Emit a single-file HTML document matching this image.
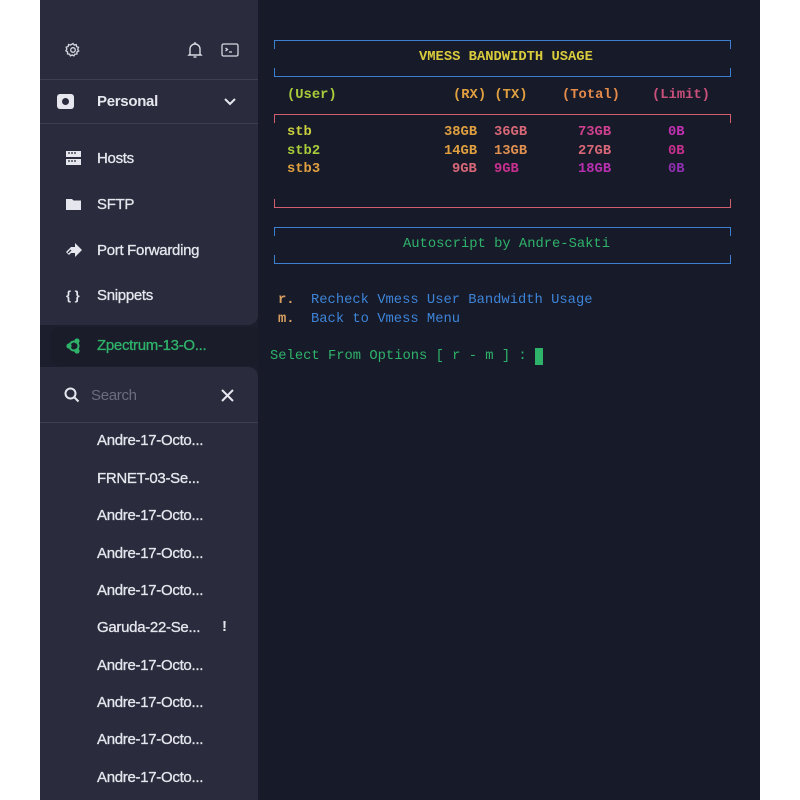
<!DOCTYPE html>
<html><head><meta charset="utf-8"><style>
*{margin:0;padding:0;box-sizing:border-box}
body{width:800px;height:800px;background:#fff;position:relative;overflow:hidden;font-family:"Liberation Sans",sans-serif}
#side{position:absolute;left:40px;top:0;width:218px;height:800px;background:#1c1e2d}
.panel{position:absolute;left:0;width:218px;background:#2a2c3d}
#term{position:absolute;left:258px;top:0;width:502px;height:800px;background:#171a29}
.t{position:absolute;font-family:"Liberation Mono",monospace;font-size:13.8px;white-space:pre;line-height:16px}
.b{font-weight:bold}
.nav{position:absolute;left:57px;color:#e6e7ee;font-size:15px;font-weight:bold;letter-spacing:-0.3px}
.n{font-weight:normal;-webkit-text-stroke:0.3px #e6e7ee}
.ic{position:absolute;left:26px}
.hl{position:absolute;height:1px;background:#3c3f52;left:0;width:218px}
.box{position:absolute;left:274px;width:457px;height:9px}
</style></head><body>
<div id="side">
  <div class="panel" style="top:0;height:325px;border-bottom-right-radius:10px"></div>
  <div class="panel" style="top:367px;height:433px;border-top-right-radius:10px"></div>
  <div style="position:absolute;left:10px;top:327px;width:208px;height:39px;background:#1a1c2a;border-radius:10px 0 0 10px"></div>
  <div class="hl" style="top:79px"></div>
  <div class="hl" style="top:123px"></div>
  <div class="hl" style="top:422px"></div>
  <svg class="ic" style="left:25px;top:42px" width="16" height="16" viewBox="0 0 16 16" fill="none" stroke="#d8d9e2" stroke-width="1.3"><circle cx="8" cy="8" r="2.3"/><path d="M8 1.5l1.2 1.6 2-.5.4 2 1.9.8-.8 1.9 1 1.7-1.8 1 0 2-2 .1-1 1.8-1.7-1-1.8 1-.9-1.8-2-.2.1-2-1.7-1.1 1-1.7-.7-1.9 1.9-.7.5-2 2 .6z"/></svg>
  <svg style="position:absolute;left:147px;top:41px" width="16" height="18" viewBox="0 0 16 18" fill="none" stroke="#d8d9e2" stroke-width="1.4"><path d="M3 13V8a5 5 0 0110 0v5l1 1H2z"/><path d="M6.5 16h3"/><path d="M8 1v2"/></svg>
  <svg style="position:absolute;left:181px;top:43px" width="18" height="14" viewBox="0 0 18 14" fill="none" stroke="#d8d9e2" stroke-width="1.3"><rect x="1" y="1" width="16" height="12" rx="1.5"/><path d="M4.5 5l2 1.5-2 1.5M8 9h3"/></svg>
  <div style="position:absolute;left:17px;top:94px;width:17px;height:15px;background:#e6e7ee;border-radius:3px"></div>
  <div style="position:absolute;left:22px;top:98px;width:7px;height:7px;background:#2a2c3d;border-radius:50%"></div>
  <div class="nav" style="left:57px;top:93px">Personal</div>
  <svg style="position:absolute;left:183px;top:97px" width="14" height="10" viewBox="0 0 14 10" fill="none" stroke="#e6e7ee" stroke-width="2"><path d="M2 2l5 5 5-5"/></svg>
  <svg style="position:absolute;left:26px;top:151px" width="15" height="14" viewBox="0 0 15 14"><rect x="0" y="0" width="15" height="6" fill="#e6e7ee"/><rect x="0" y="8" width="15" height="6" fill="#e6e7ee"/><path d="M2 2h2M5 2h2M8 2h2M2 10h2M5 10h2M8 10h2" stroke="#2a2c3d" stroke-width="1.2"/></svg>
  <div class="nav n" style="top:150px">Hosts</div>
  <svg style="position:absolute;left:26px;top:198px" width="15" height="12" viewBox="0 0 15 12"><path d="M0 1h6l1.5 1.5H15V12H0z" fill="#e6e7ee"/></svg>
  <div class="nav n" style="top:196px">SFTP</div>
  <svg style="position:absolute;left:26px;top:243px" width="16" height="14" viewBox="0 0 16 14"><path d="M0 9l5-5h4V0l7 7-7 7v-4H5l-2 2z" fill="#e6e7ee"/><path d="M2 10l3-3" stroke="#2a2c3d" stroke-width="1.3"/></svg>
  <div class="nav n" style="top:242px">Port Forwarding</div>
  <div style="position:absolute;left:26px;top:288px;color:#e6e7ee;font-size:13px;font-weight:bold">{ }</div>
  <div class="nav n" style="top:287px">Snippets</div>
  <svg style="position:absolute;left:26px;top:338px" width="15" height="16" viewBox="0 0 15 16" fill="none" stroke="#2fb36a" stroke-width="2"><circle cx="8" cy="8" r="4.5"/><circle cx="3" cy="8" r="1.6" fill="#2fb36a"/><circle cx="11" cy="3" r="1.6" fill="#2fb36a"/><circle cx="11" cy="13" r="1.6" fill="#2fb36a"/></svg>
  <div class="nav" style="top:337px;color:#2fb36a;font-weight:normal;-webkit-text-stroke:0.3px #2fb36a">Zpectrum-13-O...</div>
  <svg style="position:absolute;left:24px;top:387px" width="16" height="16" viewBox="0 0 16 16" fill="none" stroke="#e6e7ee" stroke-width="2"><circle cx="6.5" cy="6.5" r="5"/><path d="M10 10l4.5 4.5"/></svg>
  <div class="nav" style="left:51px;top:387px;color:#6b6e80;font-weight:normal">Search</div>
  <svg style="position:absolute;left:181px;top:389px" width="13" height="13" viewBox="0 0 13 13" stroke="#e6e7ee" stroke-width="2"><path d="M1 1l11 11M12 1L1 12"/></svg>
  <div class="nav n" style="top:432px">Andre-17-Octo...</div>
  <div class="nav n" style="top:470px">FRNET-03-Se...</div>
  <div class="nav n" style="top:507px">Andre-17-Octo...</div>
  <div class="nav n" style="top:545px">Andre-17-Octo...</div>
  <div class="nav n" style="top:582px">Andre-17-Octo...</div>
  <div class="nav n" style="top:619px">Garuda-22-Se...</div>
  <div class="nav" style="left:182px;top:618px">!</div>
  <div class="nav n" style="top:657px">Andre-17-Octo...</div>
  <div class="nav n" style="top:694px">Andre-17-Octo...</div>
  <div class="nav n" style="top:731px">Andre-17-Octo...</div>
  <div class="nav n" style="top:769px">Andre-17-Octo...</div>
</div>
<div id="term"></div>
<div class="box" style="top:40px;border:1px solid #3d7fd0;border-bottom:none"></div>
<div class="box" style="top:68px;border:1px solid #3d7fd0;border-top:none"></div>
<div class="t b" style="left:419px;top:50px;color:#d9cb3c">VMESS BANDWIDTH USAGE</div>
<div class="t b" style="left:287px;top:88px;color:#a9cc3a">(User)</div>
<div class="t b" style="left:453px;top:88px;color:#e0a040">(RX) (TX)</div>
<div class="t b" style="left:562px;top:88px;color:#e48a4a">(Total)</div>
<div class="t b" style="left:652px;top:88px;color:#c8507a">(Limit)</div>
<div class="box" style="top:114px;border:1px solid #d06070;border-bottom:none"></div>
<div class="box" style="top:199px;border:1px solid #d06070;border-top:none"></div>
<div class="t b" style="left:287px;top:125px;color:#c9cf3e">stb</div>
<div class="t b" style="left:287px;top:144px;color:#a9cc3a">stb2</div>
<div class="t b" style="left:287px;top:162px;color:#e0a040">stb3</div>
<div class="t b" style="left:444px;top:125px;color:#e0a040">38GB</div>
<div class="t b" style="left:494px;top:125px;color:#d86878">36GB</div>
<div class="t b" style="left:578px;top:125px;color:#d04090">73GB</div>
<div class="t b" style="left:668px;top:125px;color:#c030b0">0B</div>
<div class="t b" style="left:444px;top:144px;color:#e0a040">14GB</div>
<div class="t b" style="left:494px;top:144px;color:#e09050">13GB</div>
<div class="t b" style="left:578px;top:144px;color:#d86878">27GB</div>
<div class="t b" style="left:668px;top:144px;color:#c83090">0B</div>
<div class="t b" style="left:452px;top:162px;color:#d86878">9GB</div>
<div class="t b" style="left:494px;top:162px;color:#c83090">9GB</div>
<div class="t b" style="left:578px;top:162px;color:#b830b0">18GB</div>
<div class="t b" style="left:668px;top:162px;color:#9030b0">0B</div>
<div class="box" style="top:227px;border:1px solid #3d7fd0;border-bottom:none"></div>
<div class="box" style="top:255px;border:1px solid #3d7fd0;border-top:none"></div>
<div class="t" style="left:403px;top:237px;color:#2fb36a">Autoscript by Andre-Sakti</div>
<div class="t b" style="left:278px;top:293px;color:#d8a060">r.</div>
<div class="t" style="left:311px;top:293px;color:#3d84d8">Recheck Vmess User Bandwidth Usage</div>
<div class="t b" style="left:278px;top:312px;color:#d8a060">m.</div>
<div class="t" style="left:311px;top:312px;color:#3d84d8">Back to Vmess Menu</div>
<div class="t" style="left:270px;top:349px;color:#2fb36a">Select From Options [ r - m ] :</div>
<div style="position:absolute;left:535px;top:348px;width:8px;height:17px;background:#2fb36a"></div>
</body></html>
